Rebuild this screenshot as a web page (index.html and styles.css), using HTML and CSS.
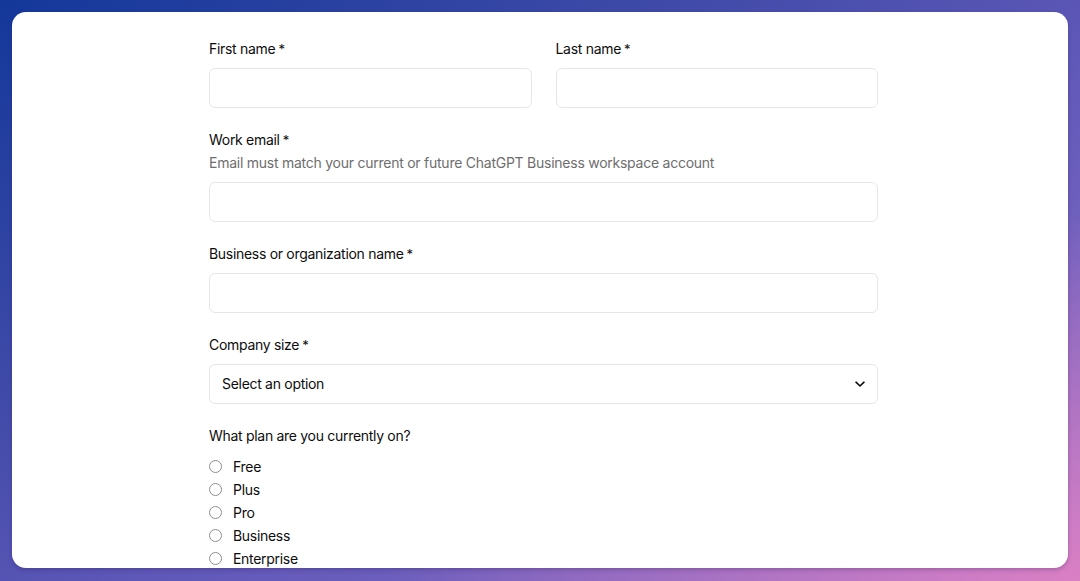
FILE: index.html
```html
<!DOCTYPE html>
<html lang="en">
<head>
<meta charset="utf-8">
<title>ChatGPT Business</title>
<link rel="stylesheet" href="styles.css">
</head>
<body>
<main class="card">
  <form class="form">
    <div class="row">
      <div class="field">
        <label class="label" for="first">First name<span class="req">*</span></label>
        <input class="input" id="first" type="text">
      </div>
      <div class="field">
        <label class="label" for="last">Last name<span class="req">*</span></label>
        <input class="input" id="last" type="text">
      </div>
    </div>

    <div class="field">
      <label class="label" for="email">Work email<span class="req">*</span></label>
      <p class="help">Email must match your current or future ChatGPT Business workspace account</p>
      <input class="input" id="email" type="email">
    </div>

    <div class="field">
      <label class="label" for="org">Business or organization name<span class="req">*</span></label>
      <input class="input" id="org" type="text">
    </div>

    <div class="field">
      <label class="label" for="size">Company size<span class="req">*</span></label>
      <div class="select" id="size">
        <span>Select an option</span>
        <svg class="chevron" width="12" height="12" viewBox="0 0 12 12" fill="none" stroke="#0d0d0d" stroke-width="1.6" stroke-linecap="round" stroke-linejoin="round"><path d="M2 4.2 6 8l4-3.8"/></svg>
      </div>
    </div>

    <fieldset class="field plans">
      <legend class="label">What plan are you currently on?</legend>
      <div class="options">
        <label class="option"><span class="radio"></span>Free</label>
        <label class="option"><span class="radio"></span>Plus</label>
        <label class="option"><span class="radio"></span>Pro</label>
        <label class="option"><span class="radio"></span>Business</label>
        <label class="option"><span class="radio"></span>Enterprise</label>
      </div>
    </fieldset>
  </form>
</main>
</body>
</html>
```

FILE: styles.css
```css
* { box-sizing: border-box; }

html, body { height: 100%; }

body {
  margin: 0;
  padding: 12px 12px 13px;
  font-family: Inter, "Noto Sans", "Liberation Sans", sans-serif;
  color: #0d0d0d;
  letter-spacing: -0.3px;
  background:
    radial-gradient(ellipse at 100% 100%, rgba(222, 128, 196, 0.95) 0%, rgba(222, 128, 196, 0) 45%),
    linear-gradient(150deg, #13389a 0%, #3f4aa8 32%, #5f58b8 55%, #8f70c8 100%);
  overflow: hidden;
}

.card {
  height: 100%;
  background: #fff;
  border-radius: 14px;
  box-shadow: 0 2px 4px rgba(40, 20, 80, 0.25);
  overflow: hidden;
  padding-top: 26px;
}

.form {
  width: 669px;
  margin-left: 197px;
  display: flex;
  flex-direction: column;
  gap: 21px;
}

.row {
  display: flex;
  gap: 24px;
}

.row .field { flex: 1; }

.field {
  display: flex;
  flex-direction: column;
  margin: 0;
  padding: 0;
  border: 0;
  min-width: 0;
}

.label {
  font-size: 14px;
  line-height: 20px;
  padding: 1px 0 0;
  margin-bottom: 9px;
}

.req {
  margin-left: 3px;
  font-size: 13px;
}

.help {
  margin: -6px 0 9px;
  font-size: 14px;
  line-height: 20px;
  color: #6e6e6e;
  letter-spacing: -0.25px;
}

.input,
.select {
  height: 40px;
  width: 100%;
  border: 1px solid #e6e6e6;
  border-radius: 6px;
  background: #fff;
  font: inherit;
  font-size: 14px;
  outline: none;
}

.select {
  display: flex;
  align-items: center;
  justify-content: space-between;
  padding: 0 11px 0 12px;
  line-height: 20px;
}

.select span { padding-bottom: 1px; }

.chevron { display: block; }

.plans .label { margin-bottom: 9px; }

.options {
  display: flex;
  flex-direction: column;
}

.option {
  display: flex;
  align-items: center;
  height: 23px;
  font-size: 14px;
}

.radio {
  width: 13px;
  height: 13px;
  border: 1px solid #8f8f8f;
  border-radius: 50%;
  margin-right: 11px;
  flex: none;
}
```
